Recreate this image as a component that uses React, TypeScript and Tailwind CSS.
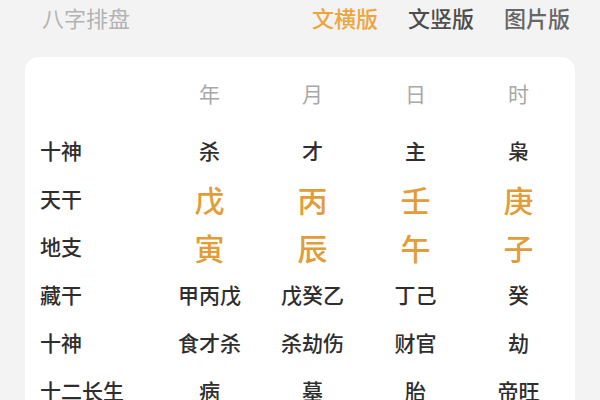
const cols = ["年", "月", "日", "时"];

type Row = { label: string; values: string[]; big?: boolean };

const rows: Row[] = [
  { label: "十神", values: ["杀", "才", "主", "枭"] },
  { label: "天干", values: ["戊", "丙", "壬", "庚"], big: true },
  { label: "地支", values: ["寅", "辰", "午", "子"], big: true },
  { label: "藏干", values: ["甲丙戊", "戊癸乙", "丁己", "癸"] },
  { label: "十神", values: ["食才杀", "杀劫伤", "财官", "劫"] },
  { label: "十二长生", values: ["病", "墓", "胎", "帝旺"] },
];

export default function App() {
  return (
    <div
      className="w-[600px] h-[400px] overflow-hidden bg-[#f3f3f3]"
      style={{ fontFamily: '"Noto Sans CJK SC", "Noto Sans", sans-serif' }}
    >
      {/* header */}
      <div className="flex items-center justify-between h-[34px] pl-[42px] pr-[30px]">
        <span className="text-[22px] text-[#b3b3b3]">八字排盘</span>
        <div className="flex gap-[30px] text-[22px] font-medium">
          <span className="text-[#eda53d]">文横版</span>
          <span className="text-[#4d4d4d]">文竖版</span>
          <span className="text-[#666666]">图片版</span>
        </div>
      </div>

      {/* card */}
      <div className="mt-[23px] mx-[25px] bg-white rounded-[14px] pl-[15px] pr-[6px] pt-[20px] pb-6">
        <div className="grid grid-cols-[118px_repeat(4,103px)] items-center">
          <div className="h-[34px]" />
          {cols.map((c) => (
            <div key={c} className="h-[34px] flex items-center justify-center text-[21px] text-[#a8a8a8]">
              {c}
            </div>
          ))}
        </div>
        <div className="mt-[16px]">
          {rows.map((r, i) => (
            <div key={i} className="grid grid-cols-[118px_repeat(4,103px)] items-center h-[48px]">
              <div className="text-[21px] font-medium text-[#2e2e2e] whitespace-nowrap">{r.label}</div>
              {r.values.map((v, j) => (
                <div
                  key={j}
                  className={
                    r.big
                      ? "text-center text-[30px] font-medium text-[#e29c38]"
                      : "text-center text-[21px] font-medium text-[#2e2e2e]"
                  }
                >
                  {v}
                </div>
              ))}
            </div>
          ))}
        </div>
      </div>
    </div>
  );
}
